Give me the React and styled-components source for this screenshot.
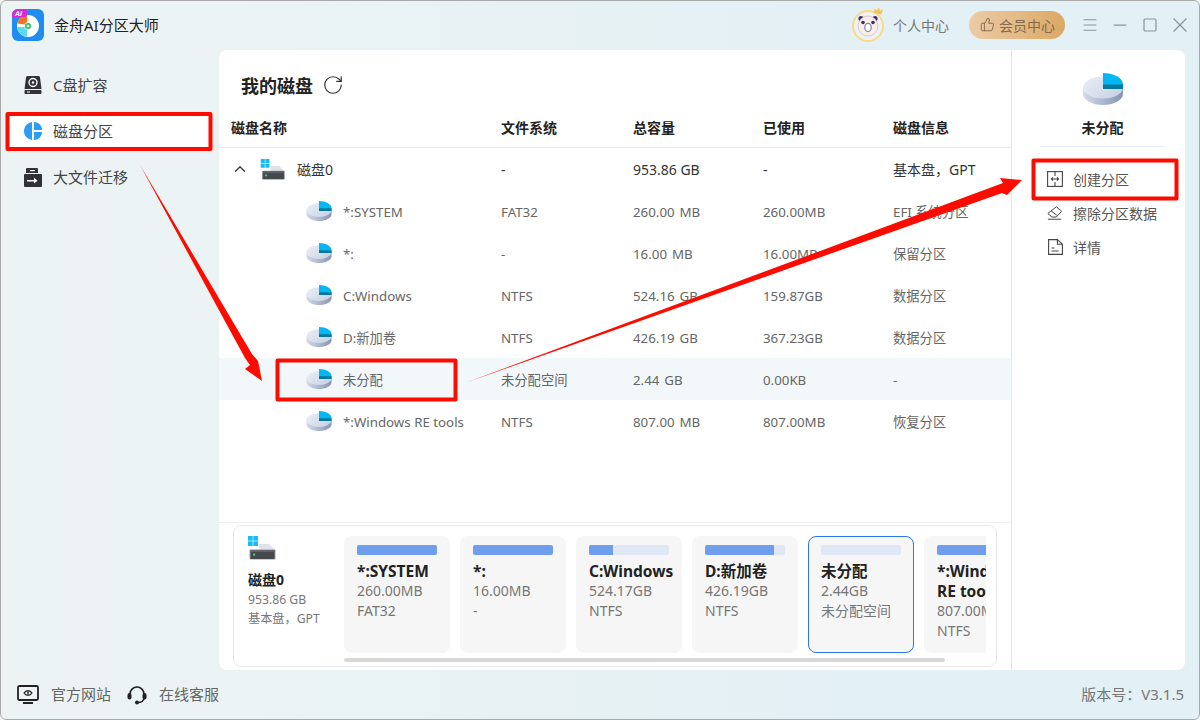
import React, { useId } from 'react';
import styled, { createGlobalStyle } from 'styled-components';
import { RotateCw, ChevronUp, Minus, X, Menu, Square, ThumbsUp } from 'lucide-react';

const GlobalStyle = createGlobalStyle`
  html, body {
    margin: 0;
    padding: 0;
    background: #fff;
  }
  * {
    box-sizing: border-box;
  }
  body {
    font-family: "Noto Sans", "Noto Sans CJK SC", sans-serif;
    font-size: 14px;
  }
`;

const disks = [
  { name: '*:SYSTEM', fs: 'FAT32', total: '260.00 MB', used: '260.00MB', info: 'EFI 系统分区' },
  { name: '*:', fs: '-', total: '16.00 MB', used: '16.00MB', info: '保留分区' },
  { name: 'C:Windows', fs: 'NTFS', total: '524.16 GB', used: '159.87GB', info: '数据分区' },
  { name: 'D:新加卷', fs: 'NTFS', total: '426.19 GB', used: '367.23GB', info: '数据分区' },
  { name: '未分配', fs: '未分配空间', total: '2.44 GB', used: '0.00KB', info: '-', active: true },
  { name: '*:Windows RE tools', fs: 'NTFS', total: '807.00 MB', used: '807.00MB', info: '恢复分区' }
];

const cards = [
  { name: '*:SYSTEM', size: '260.00MB', fs: 'FAT32', fill: 100 },
  { name: '*:', size: '16.00MB', fs: '-', fill: 100 },
  { name: 'C:Windows', size: '524.17GB', fs: 'NTFS', fill: 30 },
  { name: 'D:新加卷', size: '426.19GB', fs: 'NTFS', fill: 86 },
  { name: '未分配', size: '2.44GB', fs: '未分配空间', fill: 0, selected: true },
  { name: '*:Windows RE tools', size: '807.00MB', fs: 'NTFS', fill: 100 }
];

const PieIcon = ({ width = 26, height = 20 }) => {
  const id = useId();
  return (
    <svg width={width} height={height} viewBox="0 0 40 32">
      <defs>
        <linearGradient id={id + 'top'} x1="0" y1="0" x2="1" y2="0.6">
          <stop offset="0" stopColor="#eceff8" />
          <stop offset="1" stopColor="#ccd3e4" />
        </linearGradient>
        <linearGradient id={id + 'side'} x1="0" y1="0" x2="1" y2="0">
          <stop offset="0" stopColor="#d3daea" />
          <stop offset="1" stopColor="#8794b3" />
        </linearGradient>
      </defs>
      <path d="M0 14v7c0 6 9 11 20 11s20-5 20-11v-7z" fill={`url(#${id}side)`} />
      <ellipse cx="20" cy="14.500" rx="20" ry="11" fill={`url(#${id}top)`} />
      <path d="M20 0c11 0 20 5 20 11.500v4.500h-20z" fill="#03b8f2" />
      <path d="M20 11.500h20v4.500h-20z" fill="#047a9e" />
    </svg>
  );
};

const DiskIcon = ({ width = 26, height = 21 }) => (
  <svg width={width} height={height} viewBox="0 0 28 24">
    <path d="M11 8h10l6 6H11z" fill="#dfe2e8" />
    <rect x="1.500" y="13.500" width="26" height="10" rx="1" fill="#9b9ea3" />
    <rect x="2.500" y="14" width="24" height="9" fill="#45484c" />
    <rect x="2.500" y="14" width="24" height="2" fill="#5f6266" />
    <rect x="5" y="17.500" width="2.200" height="2.200" fill="#3fd35f" />
    <rect x="0" y="0" width="4.700" height="4.700" fill="#18bdf5" />
    <rect x="5.300" y="0" width="4.700" height="4.700" fill="#18bdf5" />
    <rect x="0" y="5.300" width="4.700" height="4.700" fill="#18bdf5" />
    <rect x="5.300" y="5.300" width="4.700" height="4.700" fill="#18bdf5" />
  </svg>
);

const Logo = () => (
  <svg width="32" height="32" viewBox="0 0 32 32">
    <rect width="32" height="32" rx="6" fill="#1f8cf2" />
    <circle cx="16" cy="17" r="11" fill="#fff" />
    <path d="M15 16L5.400 14.500A11 11 0 0 1 15 6z" fill="#f5731f" />
    <path d="M15 18H5.100A11 11 0 0 0 15 27.900z" fill="#5ed8ee" />
    <circle cx="16" cy="17" r="3.600" fill="#2fc45b" stroke="#fff" strokeWidth="0.800" />
    <circle cx="16" cy="17" r="1.300" fill="#fff" />
    <path d="M0 6a6 6 0 0 1 6-6h9v5a3 3 0 0 1-3 3H0z" fill="#d62bd6" />
    <text x="3" y="6.800" fontSize="7" fontWeight="700" fontStyle="italic" fill="#fff" fontFamily="Liberation Sans">AI</text>
  </svg>
);

const Panda = () => (
  <svg width="36" height="36" viewBox="0 0 36 36">
    <circle cx="17" cy="19" r="15" fill="#eef3f2" stroke="#f9d98a" strokeWidth="2" />
    <circle cx="10" cy="11.500" r="2.600" fill="#3c2f6a" />
    <circle cx="24" cy="11.500" r="2.600" fill="#3c2f6a" />
    <circle cx="17" cy="19" r="10" fill="#fbeee6" stroke="#b9b2c8" strokeWidth="0.600" />
    <circle cx="12" cy="15.500" r="1.800" fill="#3c2f6a" />
    <circle cx="22" cy="15.500" r="1.800" fill="#3c2f6a" />
    <ellipse cx="17" cy="20.500" rx="3.200" ry="4.200" fill="#fff" stroke="#7a86a8" strokeWidth="1.200" />
    <path d="M23 5.500l.5-4 2.500 2 1.800-3 1.400 3 2.600-1-1.300 5z" fill="#f4c25a" />
  </svg>
);

const DriveIcon = () => (
  <svg width="18" height="18" viewBox="0 0 18 18">
    <path d="M3.500 0h11A1.500 1.500 0 0 1 16 1.500L17.500 13h-17L2 1.500A1.500 1.500 0 0 1 3.500 0z" fill="#303236" />
    <circle cx="9" cy="6.500" r="4" fill="none" stroke="#fff" strokeWidth="1.400" />
    <circle cx="9" cy="6.500" r="1.200" fill="#fff" />
    <rect x="0.500" y="14" width="17" height="4" rx="1" fill="#303236" />
    <rect x="3" y="15.500" width="3" height="1" fill="#fff" />
  </svg>
);

const PartitionIcon = () => (
  <svg width="18" height="18" viewBox="0 0 18 18">
    <path d="M8 .1V18A9 9 0 0 1 8 .1z" fill="#2d9cf5" />
    <path d="M10 0a8 8 0 0 1 8 8h-8z" fill="#2d9cf5" />
    <path d="M10 10h8a8 8 0 0 1-8 8z" fill="#2d9cf5" />
  </svg>
);

const MoveIcon = () => (
  <svg width="18" height="19" viewBox="0 0 18 19">
    <path d="M3 0h10a1 1 0 0 1 1 1v4H2V1a1 1 0 0 1 1-1z" fill="#303236" />
    <rect x="6" y="2" width="5" height="1.200" fill="#fff" />
    <path d="M1 6h16a1 1 0 0 1 1 1v11a1 1 0 0 1-1 1H1a1 1 0 0 1-1-1V7a1 1 0 0 1 1-1z" fill="#303236" />
    <path d="M3 12h7V9.800l3.500 2.900L10 15.600v-2.200H3z" fill="#fff" />
  </svg>
);

const ScreenIcon = () => (
  <svg width="22" height="20" viewBox="0 0 22 20">
    <rect x="1" y="1" width="20" height="14" rx="1.500" fill="none" stroke="#222" strokeWidth="1.800" />
    <path d="M6 17h10v2H6z" fill="#222" />
    <path d="M7 8c2-3 6-3 8 0-2 3-6 3-8 0z" fill="none" stroke="#222" strokeWidth="1.300" />
    <circle cx="11" cy="8" r="1" fill="#222" />
  </svg>
);

const HeadsetIcon = () => (
  <svg width="20" height="20" viewBox="0 0 20 20">
    <path d="M3 9a7 7 0 0 1 14 0v4c0 3-3 4.500-6 4.500" fill="none" stroke="#222" strokeWidth="1.700" />
    <rect x="0.500" y="8" width="4" height="6.500" rx="2" fill="#222" />
    <rect x="15.500" y="8" width="4" height="6.500" rx="2" fill="#222" />
    <circle cx="10" cy="17.500" r="2" fill="#222" />
  </svg>
);

const CreateIcon = () => (
  <svg width="16" height="16" viewBox="0 0 16 16" fill="none" stroke="#444" strokeWidth="1.100">
    <rect x="0.600" y="0.600" width="14.800" height="14.800" />
    <path d="M8 1v4M8 11v4M4.500 8h7M6 6.400L4.400 8 6 9.600M10 6.400L11.600 8 10 9.600" />
  </svg>
);

const EraseIcon = () => (
  <svg width="18" height="16" viewBox="0 0 18 16" fill="none" stroke="#444" strokeWidth="1.100">
    <path d="M10.500 1l6 5-6 6.500H5.500L1 8.500z" />
    <path d="M4.500 5.500l6.500 5M1 15h15" />
  </svg>
);

const DetailIcon = () => (
  <svg width="15" height="16" viewBox="0 0 15 16" fill="none" stroke="#444" strokeWidth="1.100">
    <path d="M.6.600h8.800l5 4.600v10.200H.6zM9.400.6v4.600h5M3.500 9h3M3.500 12h7" />
  </svg>
);

const App = () => (
  <Window>
    <GlobalStyle />
    <TitleBar>
      <Brand>
        <Logo />
        <BrandName>金舟AI分区大师</BrandName>
      </Brand>
      <TitleActions>
        <UserLink>
          <Panda />
          <span>个人中心</span>
        </UserLink>
        <VipButton>
          <ThumbsUp size={15} strokeWidth={1.5} />
          会员中心
        </VipButton>
        <WindowControls>
          <Menu size={18} strokeWidth={1.5} />
          <Minus size={20} strokeWidth={1.5} />
          <Square size={16} strokeWidth={1.8} />
          <X size={24} strokeWidth={1.3} />
        </WindowControls>
      </TitleActions>
    </TitleBar>

    <Body>
      <Sidebar>
        <NavItem>
          <DriveIcon />
          <span>C盘扩容</span>
        </NavItem>
        <NavItem $active>
          <PartitionIcon />
          <span>磁盘分区</span>
        </NavItem>
        <NavItem>
          <MoveIcon />
          <span>大文件迁移</span>
        </NavItem>
      </Sidebar>

      <Panel>
        <Content>
          <TableArea>
            <Heading>
              我的磁盘
              <RotateCw size={22} strokeWidth={1.3} color="#333" />
            </Heading>
            <HeadRow>
              <span>磁盘名称</span>
              <span>文件系统</span>
              <span>总容量</span>
              <span>已使用</span>
              <span>磁盘信息</span>
            </HeadRow>
            <DiskRow>
              <NameCell>
                <ChevronUp size={18} strokeWidth={1.6} color="#333" />
                <DiskIcon />
                <span>磁盘0</span>
              </NameCell>
              <span>-</span>
              <span>953.86 GB</span>
              <span>-</span>
              <span>基本盘，GPT</span>
            </DiskRow>
            {disks.map(d => (
              <PartRow key={d.name} $active={d.active}>
                <PartName>
                  <PieIcon />
                  <span>{d.name}</span>
                </PartName>
                <span>{d.fs}</span>
                <TotalCell>{d.total}</TotalCell>
                <span>{d.used}</span>
                <span>{d.info}</span>
              </PartRow>
            ))}
          </TableArea>

          <DiskCard>
            <DiskSummary>
              <DiskIcon width={28} height={24} />
              <SummaryName>磁盘0</SummaryName>
              <SummaryText>953.86 GB</SummaryText>
              <SummaryText>基本盘，GPT</SummaryText>
            </DiskSummary>
            <CardScroller>
              <CardTrack>
                {cards.map(c => (
                  <PartCard key={c.name} $selected={c.selected}>
                    <UsageBar>
                      <UsageFill style={{ width: c.fill + '%' }} />
                    </UsageBar>
                    <CardName>{c.name}</CardName>
                    <CardText>{c.size}</CardText>
                    <CardText>{c.fs}</CardText>
                  </PartCard>
                ))}
              </CardTrack>
              <ScrollThumb />
            </CardScroller>
          </DiskCard>
        </Content>

        <Details>
          <DetailHead>
            <PieIcon width={40} height={32} />
            <DetailName>未分配</DetailName>
          </DetailHead>
          <DetailMenu>
            <DetailItem>
              <IconSlot><CreateIcon /></IconSlot>
              <span>创建分区</span>
            </DetailItem>
            <DetailItem>
              <IconSlot><EraseIcon /></IconSlot>
              <span>擦除分区数据</span>
            </DetailItem>
            <DetailItem>
              <IconSlot><DetailIcon /></IconSlot>
              <span>详情</span>
            </DetailItem>
          </DetailMenu>
        </Details>
      </Panel>
    </Body>

    <Footer>
      <FooterLinks>
        <FooterLink>
          <ScreenIcon />
          <span>官方网站</span>
        </FooterLink>
        <FooterLink>
          <HeadsetIcon />
          <span>在线客服</span>
        </FooterLink>
      </FooterLinks>
      <Version>版本号：V3.1.5</Version>
    </Footer>

    {/* red marks drawn over the screenshot */}
    <Marks width="1200" height="720" viewBox="0 0 1200 720">
      <g fill="none" stroke="#fe0b00" strokeWidth="4" strokeLinejoin="round">
        <rect x="7.500" y="114" width="203" height="35" />
        <rect x="277.500" y="360.500" width="178" height="39" />
        <rect x="1033.500" y="160.500" width="143" height="38" />
      </g>
      <g fill="#fe0b00">
        <path d="M140 165L252 354 258 361 262 381 245 369 250 365 245 358z" />
        <path d="M465 383L1002 193 1007 195 1022 180 1000 178 1003 183z" />
      </g>
    </Marks>
  </Window>
);

export default App;

const Window = styled.div`
  position: relative;
  width: 1200px;
  height: 720px;
  display: flex;
  flex-direction: column;
  overflow: hidden;
  border: 1px solid #a9a9a9;
  border-radius: 6px;
  color: #222;
  background: linear-gradient(90deg, #edf3f3 0, #e9f2f4 400px, #e3f0f5 900px);
`;

const TitleBar = styled.header`
  height: 49px;
  flex: none;
  display: flex;
  align-items: center;
  justify-content: space-between;
  padding: 0 4px 2px 11px;
`;

const Brand = styled.div`
  display: flex;
  align-items: center;
  gap: 10px;
  font-size: 15px;
`;

const BrandName = styled.span`
  color: #222;
`;

const TitleActions = styled.div`
  display: flex;
  align-items: center;
`;

const UserLink = styled.div`
  display: flex;
  align-items: center;
  gap: 6px;
  color: #777;
`;

const VipButton = styled.div`
  display: flex;
  align-items: center;
  gap: 4px;
  height: 28px;
  width: 96px;
  margin-left: 20px;
  padding-left: 11px;
  border-radius: 14px;
  color: #86684a;
  background: linear-gradient(90deg, #eccba6, #dba865);
`;

const WindowControls = styled.div`
  display: grid;
  grid-template-columns: repeat(4, 30px);
  justify-items: center;
  align-items: center;
  margin-left: 10px;
  color: #8b9498;
`;

const Body = styled.div`
  flex: 1;
  min-height: 0;
  display: flex;
  margin-right: 14px;
`;

const Sidebar = styled.nav`
  width: 218px;
  flex: none;
  display: flex;
  flex-direction: column;
  gap: 8px;
  padding: 16px 6px 0 5px;
`;

const NavItem = styled.div`
  height: 38px;
  display: flex;
  align-items: center;
  gap: 11px;
  padding-left: 18px;
  font-size: 15px;
  color: #444;
  background: ${p => (p.$active ? '#fff' : 'transparent')};

  span {
    margin-top: -2px;
  }
`;

const Panel = styled.main`
  flex: 1;
  min-width: 0;
  display: flex;
  border-radius: 8px;
  background: #fff;
  overflow: hidden;
`;

const Content = styled.section`
  width: 792px;
  flex: none;
  display: flex;
  flex-direction: column;
`;

const TableArea = styled.div`
  flex: 1;
  border-bottom: 1px solid #eeeef6;
`;

const Heading = styled.h1`
  height: 57px;
  margin: 0;
  display: flex;
  align-items: center;
  gap: 9px;
  padding: 12px 0 0 22px;
  font-size: 18px;
  font-weight: 700;
  color: #222;
`;

const Row = styled.div`
  display: grid;
  grid-template-columns: 270px 132px 130px 130px 1fr;
  align-items: center;
  padding-left: 12px;
`;

const HeadRow = styled(Row)`
  height: 41px;
  border-bottom: 1px solid #e9e9e9;
  font-weight: 700;
  color: #222;
`;

const DiskRow = styled(Row)`
  height: 42px;
  color: #333;
`;

const PartRow = styled(Row)`
  height: 42px;
  font-size: 13.300px;
  color: #666;
  background: ${p => (p.$active ? '#f2f7fa' : 'transparent')};

  > span,
  > div > span {
    padding-top: 1px;
  }
`;

const TotalCell = styled.span`
  word-spacing: 1.500px;
`;

const NameCell = styled.div`
  display: flex;
  align-items: center;
  gap: 11px;

  span {
    margin-left: 0;
  }
`;

const PartName = styled.div`
  display: flex;
  align-items: center;
  gap: 11px;
  padding-left: 75px;
`;

const DiskCard = styled.div`
  height: 142px;
  flex: none;
  display: flex;
  margin: 2px 14px 3px;
  padding: 10px 10px 0 14px;
  border: 1px solid #e9e9e9;
  border-radius: 8px;
`;

const DiskSummary = styled.div`
  width: 96px;
  flex: none;
  font-size: 12.200px;
  color: #777;
`;

const SummaryName = styled.div`
  margin-top: 6px;
  font-size: 14px;
  font-weight: 700;
  line-height: 20px;
  color: #222;
`;

const SummaryText = styled.div`
  line-height: 19px;
`;

const CardScroller = styled.div`
  flex: 1;
  min-width: 0;
  overflow: hidden;
`;

const CardTrack = styled.div`
  display: flex;
  gap: 10px;
`;

const PartCard = styled.div`
  width: 106px;
  height: 117px;
  flex: none;
  padding: 8px 12px;
  border: 1px solid ${p => (p.$selected ? '#2a77f0' : '#f6f6f6')};
  border-radius: 8px;
  background: #f6f6f6;
`;

const UsageBar = styled.div`
  height: 10px;
  width: 80px;
  border-radius: 2px;
  overflow: hidden;
  background: #e0e7f5;
`;

const UsageFill = styled.div`
  height: 100%;
  background: #6f9eed;
`;

const CardName = styled.div`
  margin-top: 6px;
  font-size: 15.500px;
  font-weight: 700;
  line-height: 20px;
  color: #222;
`;

const CardText = styled.div`
  line-height: 20px;
  color: #777;
`;

const ScrollThumb = styled.div`
  width: 601px;
  height: 4px;
  margin-top: 5px;
  border-radius: 2px;
  background: #d8d8d8;
`;

const Details = styled.aside`
  flex: 1;
  min-width: 0;
  border-left: 1px solid #e1e6ec;
  padding: 23px 20px 0 28px;
`;

const DetailHead = styled.div`
  display: flex;
  flex-direction: column;
  align-items: center;
  height: 74px;
  border-bottom: 1px solid #e9eff5;
`;

const DetailName = styled.div`
  margin-top: 13px;
  font-weight: 700;
  line-height: 20px;
  color: #222;
`;

const DetailMenu = styled.div`
  display: flex;
  flex-direction: column;
  gap: 14px;
  padding: 22px 0 0 7px;
`;

const DetailItem = styled.div`
  height: 20px;
  display: flex;
  align-items: center;
  gap: 10px;
  color: #555;
`;

const IconSlot = styled.div`
  width: 16px;
  flex: none;
  display: flex;
  justify-content: center;
`;

const Footer = styled.footer`
  height: 49px;
  flex: none;
  display: flex;
  align-items: center;
  justify-content: space-between;
  padding: 0 15px 0 16px;
  font-size: 15px;
  color: #666;
`;

const FooterLinks = styled.div`
  display: flex;
  align-items: center;
  gap: 16px;
`;

const FooterLink = styled.div`
  display: flex;
  align-items: center;
  gap: 12px;

  span {
    margin-top: -2px;
  }
`;

const Version = styled.div`
  margin-top: -2px;
  color: #777;
`;

const Marks = styled.svg`
  position: absolute;
  left: -1px;
  top: -1px;
  pointer-events: none;
`;
